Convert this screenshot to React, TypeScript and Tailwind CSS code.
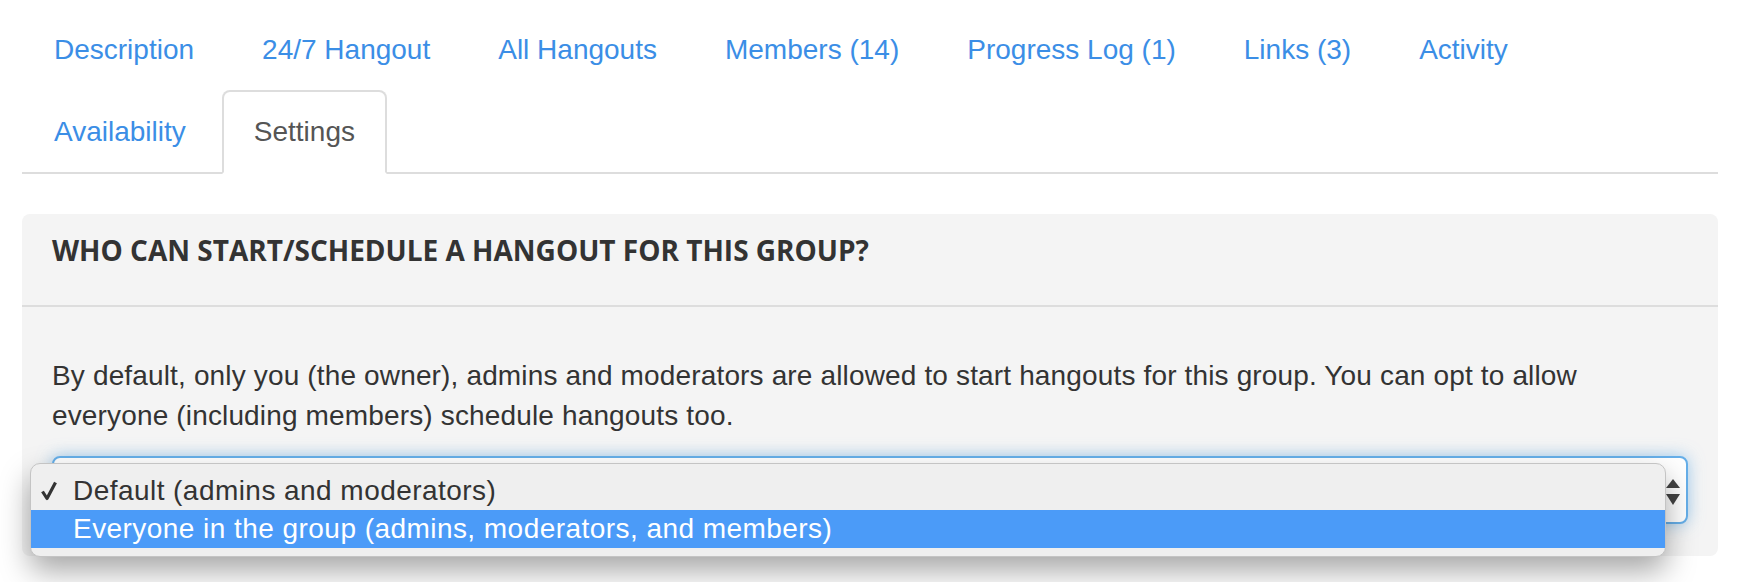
const tabsTop = ['Description', '24/7 Hangout', 'All Hangouts', 'Members (14)', 'Progress Log (1)', 'Links (3)', 'Activity'];
const tabsBottom = ['Availability', 'Settings'];
const activeTab = 'Settings';

const Tab = ({ label }: { label: string }) => {
  const active = label === activeTab;
  return (
    <li className="-mb-[2px] mr-[4px]">
      <a
        href="#"
        className={
          active
            ? 'block px-[30px] py-[20px] leading-[40px] text-[28px] text-[#555] bg-white border-2 border-[#ddd] border-b-transparent rounded-t-[8px]'
            : 'block px-[30px] py-[20px] leading-[40px] text-[28px] text-[#3b8ee6] border-2 border-transparent rounded-t-[8px]'
        }
      >
        {label}
      </a>
    </li>
  );
};

const App = () => {
  return (
    <div
      className="min-h-[582px] bg-white pl-[22px] pr-[24px] pt-[8px] overflow-hidden"
      style={{ fontFamily: '"Liberation Sans", Arial, sans-serif' }}
    >
      <ul className="flex flex-wrap border-b-2 border-[#ddd]">
        {tabsTop.map((t) => (
          <Tab key={t} label={t} />
        ))}
        <li className="basis-full h-0" />
        {tabsBottom.map((t) => (
          <Tab key={t} label={t} />
        ))}
      </ul>

      <div className="mt-[40px] rounded-[8px] bg-[#f4f4f4]">
        <div className="px-[30px] pt-[16px] pb-[35px] border-b-2 border-[#ddd]">
          <h3
            className="text-[28px] leading-[40px] font-bold text-[#333] uppercase"
            style={{ fontFamily: '"Open Sans", sans-serif' }}
          >
            Who can start/schedule a hangout for this group?
          </h3>
        </div>
        <div className="px-[30px] pt-[49px] pb-[32px]">
          <p className="text-[28px] leading-[40px] tracking-[0.15px] text-[#333] mb-[20px]">
            By default, only you (the owner), admins and moderators are allowed to start hangouts for this group. You can opt to allow
            <br />
            everyone (including members) schedule hangouts too.
          </p>
          <div className="relative">
            <div className="relative h-[68px] w-full rounded-[8px] border-2 border-[#66afe9] bg-white shadow-[0_0_16px_rgba(102,175,233,0.6)]">
              <svg className="absolute right-[6px] top-[21px]" width="14" height="26" viewBox="0 0 14 26">
                <polygon points="7,0 14,9 0,9" fill="#444" />
                <polygon points="0,15 14,15 7,26" fill="#444" />
              </svg>
            </div>

            {/* open native menu */}
            <div className="absolute left-[-22px] top-[7px] z-10 w-[1636px] rounded-[10px] border border-[#c4c4c4] bg-[#efefef] pt-[8px] pb-[8px] shadow-[0_14px_30px_rgba(0,0,0,0.35)]">
              <div className="relative h-[38px] pl-[42px] text-[28px] leading-[38px] tracking-[0.45px] text-[#333]">
                <svg className="absolute left-[10px] top-[9px]" width="16" height="20" viewBox="0 0 16 20">
                  <path d="M1.5 10.5 L6 17.5 L14.5 1.5" fill="none" stroke="#333" strokeWidth="3.2" strokeLinejoin="round" />
                </svg>
                Default (admins and moderators)
              </div>
              <div className="h-[38px] bg-[#4b9bf8] pl-[42px] text-[28px] leading-[38px] tracking-[0.45px] text-white">
                Everyone in the group (admins, moderators, and members)
              </div>
            </div>
          </div>
        </div>
      </div>
    </div>
  );
};

export default App;
